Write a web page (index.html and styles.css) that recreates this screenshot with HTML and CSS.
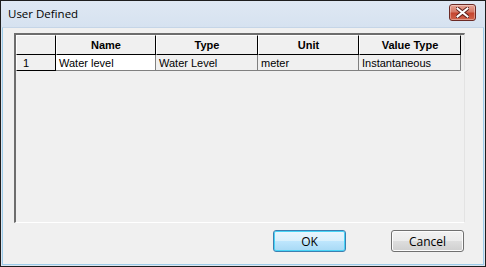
FILE: index.html
```html
<!DOCTYPE html>
<html>
<head>
    <title>User Defined</title>
    <link rel="stylesheet" href="styles.css">
</head>
<body>
    <div class="window">
        <div class="titlebar">
            <span class="title">User Defined</span>
            <button class="close" type="button">
                <svg width="13" height="11" viewBox="0 0 13 11">
                    <path d="M1.5 1.5 L11.5 9.5 M11.5 1.5 L1.5 9.5" stroke="#5a1f1a" stroke-width="4" stroke-linecap="square"/>
                    <path d="M1.5 1.5 L11.5 9.5 M11.5 1.5 L1.5 9.5" stroke="#ffffff" stroke-width="2" stroke-linecap="square"/>
                </svg>
            </button>
        </div>
        <div class="client">
            <div class="grid">
                <table>
                    <thead>
                        <tr>
                            <th class="rowhead"></th>
                            <th class="c-name">Name</th>
                            <th class="c-type">Type</th>
                            <th class="c-unit">Unit</th>
                            <th class="c-vtype">Value Type</th>
                        </tr>
                    </thead>
                    <tbody>
                        <tr>
                            <td class="rowhead">1</td>
                            <td class="editing">Water level</td>
                            <td>Water Level</td>
                            <td>meter</td>
                            <td>Instantaneous</td>
                        </tr>
                    </tbody>
                </table>
            </div>
            <div class="buttons">
                <button class="btn btn-default" type="button">OK</button>
                <button class="btn" type="button">Cancel</button>
            </div>
        </div>
    </div>
</body>
</html>
```

FILE: styles.css
```css
html, body {
    margin: 0;
    padding: 0;
    background: #f0f0f0;
}
.window {
    width: 486px;
    height: 267px;
    box-sizing: border-box;
    border: 1px solid #1e1e1e;
    background: #dbe5f1;
    display: flex;
    flex-direction: column;
    font-family: "Liberation Sans", Arial, sans-serif;
}
.titlebar {
    height: 26px;
    display: flex;
    align-items: flex-start;
    justify-content: space-between;
    padding: 0 9px 0 7px;
    background: linear-gradient(#dfe8f3, #d6e2f0);
}
.title {
    font-family: "Open Sans", "Liberation Sans", sans-serif;
    font-size: 11.5px;
    color: #000;
    padding-top: 5px;
}
.close {
    margin-top: 3px;
    width: 27px;
    height: 17px;
    padding: 0;
    border: 1px solid #6b2a25;
    border-radius: 3px;
    background: linear-gradient(#e8a496, #d57a68 45%, #c5452f 55%, #d0644c);
    box-shadow: inset 0 0 0 1px rgba(255,255,255,0.35);
    display: flex;
    align-items: center;
    justify-content: center;
}
.client {
    flex: 1;
    margin: 0 1px 1px 1px;
    border: 1px solid #9ccce9;
    border-top-color: #c5d5e7;
    background: #f0f0f0;
    display: flex;
    flex-direction: column;
    padding: 5px 19px 0 11px;
}
.grid {
    height: 190px;
    box-sizing: border-box;
    border-top: 2px solid #6d6d6d;
    border-left: 2px solid #6d6d6d;
    border-right: 1px solid #e3e3e3;
    border-bottom: 1px solid #ffffff;
    background: #f0f0f0;
    margin-right: -1px;
}
table {
    border-collapse: separate;
    border-spacing: 0;
    font-size: 11px;
    color: #000;
}
th {
    height: 18px;
    padding: 0;
    font-weight: bold;
    text-align: center;
    background: #f0f0f0;
    border-top: 1px solid #ffffff;
    border-left: 1px solid #ffffff;
    border-right: 1px solid #000;
    border-bottom: 1px solid #000;
}
td {
    height: 15px;
    padding: 0 0 0 3px;
    white-space: nowrap;
    background: #f0f0f0;
    border-right: 1px solid #808080;
    border-bottom: 1px solid #808080;
}
td.rowhead {
    padding-left: 6px;
    border-left: 1px solid #ffffff;
    border-right: 1px solid #000;
    border-bottom: 1px solid #000;
}
td.editing {
    background: #ffffff;
}
.rowhead { width: 40px; box-sizing: border-box; }
.c-name { width: 98px; }
.c-type { width: 100px; }
.c-unit { width: 99px; }
.c-vtype { width: 100px; }
.buttons {
    display: flex;
    justify-content: flex-end;
    gap: 45px;
    padding-top: 7px;
}
.btn {
    width: 73px;
    height: 22px;
    font-family: "Open Sans", "Liberation Sans", sans-serif;
    font-size: 12px;
    color: #000;
    border: 1px solid #707070;
    border-radius: 3px;
    background: linear-gradient(#f2f2f2 0%, #ebebeb 50%, #dddddd 51%, #cfcfcf 100%);
    box-shadow: inset 0 0 0 1px #fcfcfc;
    padding: 0;
}
.btn-default {
    border-color: #3c7fb1;
    background: linear-gradient(#eaf6fd 0%, #d9f0fc 50%, #bee6fd 51%, #a7d9f5 100%);
    box-shadow: inset 0 0 0 1px #48d4f6;
}
```
